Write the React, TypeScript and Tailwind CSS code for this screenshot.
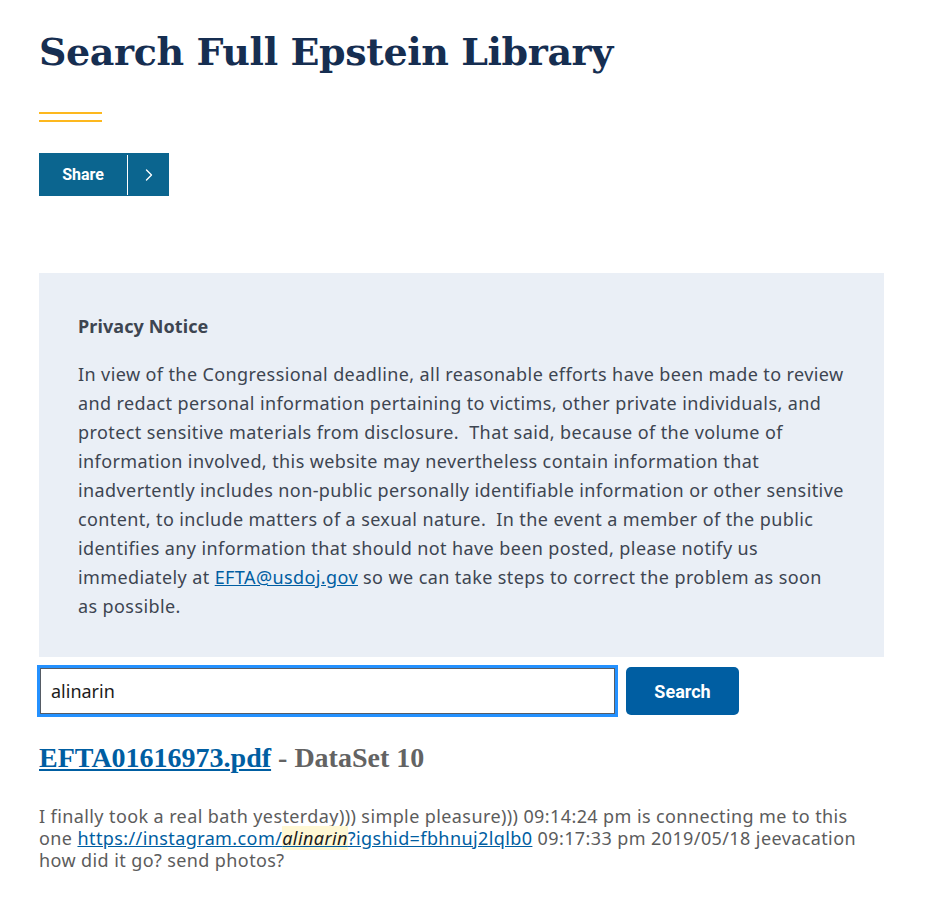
import { ChevronRight } from "lucide-react";

const serif = "font-['DejaVu_Serif',serif]";
const sans = "font-['Noto_Sans',sans-serif]";

const NOTICE =
  "In view of the Congressional deadline, all reasonable efforts have been made to review and redact personal information pertaining to victims, other private individuals, and protect sensitive materials from disclosure.\u00a0 That said, because of the volume of information involved, this website may nevertheless contain information that inadvertently includes non-public personally identifiable information or other sensitive content, to include matters of a sexual nature.\u00a0 In the event a member of the public identifies any information that should not have been posted, please notify us immediately at ";

export default function App() {
  return (
    <div className={`bg-white min-h-[920px] pl-[39px] pr-[61px] pt-[28px] ${sans}`}>
      <h1 className={`${serif} text-[38px] leading-[48px] font-bold text-[#162e51] tracking-[-0.4px]`}>
        Search Full Epstein Library
      </h1>

      {/* gold double rule */}
      <div className="mt-[36px] w-[63px] flex flex-col gap-[6px]">
        <div className="h-[2px] bg-[#fdb81e]" />
        <div className="h-[2px] bg-[#fdb81e]" />
      </div>

      <div className="mt-[31px] flex">
        <button className="h-[43px] w-[130px] flex items-center bg-[#0b658f] text-white">
          <span className="w-[88px] text-[16px] font-bold font-['Roboto',sans-serif]">Share</span>
          <span className="h-[40px] w-px bg-white" />
          <span className="flex-1 flex justify-center">
            <ChevronRight size={20} strokeWidth={1.6} />
          </span>
        </button>
      </div>

      <div className="mt-[77px] bg-[#eaeff6] px-[39px] pt-[40px] pb-[36px] text-[#3d4551] tracking-[0.4px]">
        <p className="text-[18px] font-bold leading-[26px] tracking-[0.1px]">Privacy Notice</p>
        <p className="mt-[21px] text-[18px] leading-[29px]">
          {NOTICE}
          <a className="text-[#005ea2] underline" href="#">EFTA@usdoj.gov</a> so we can take steps to correct the
          problem as soon as possible.
        </p>
      </div>

      <div className="mt-[8px] flex items-center gap-[8px]">
        <div className="w-[581px] h-[52px] border-[3px] border-[#2491ff] ml-[-2px]">
          <input
            className="w-full h-full border border-[#565c65] px-[10px] text-[18px] text-[#1b1b1b] outline-none"
            defaultValue="alinarin"
          />
        </div>
        <button className="h-[48px] w-[113px] rounded-[5px] bg-[#005ea2] text-white text-[18px] font-bold font-['Roboto',sans-serif]">
          Search
        </button>
      </div>

      <h3 className="mt-[24px] font-['Liberation_Serif',serif] text-[28px] leading-[34px] font-bold">
        <a href="#" className="text-[#005ea2] underline">EFTA01616973.pdf</a>
        <span className="text-[#636363]"> - DataSet 10</span>
      </h3>

      <p className="mt-[30px] text-[18px] leading-[22px] text-[#5c5c5c] tracking-[0.4px]">
        I finally took a real bath yesterday))) simple pleasure))) 09:14:24 pm is connecting me to this one{" "}
        <a href="#" className="text-[#005ea2] underline">
          https://instagram.com/<em className="bg-[#fff8d4] text-[#1b1b1b]">alinarin</em>?igshid=fbhnuj2lqlb0
        </a>{" "}
        09:17:33 pm 2019/05/18 jeevacation how did it go? send photos?
      </p>
    </div>
  );
}
